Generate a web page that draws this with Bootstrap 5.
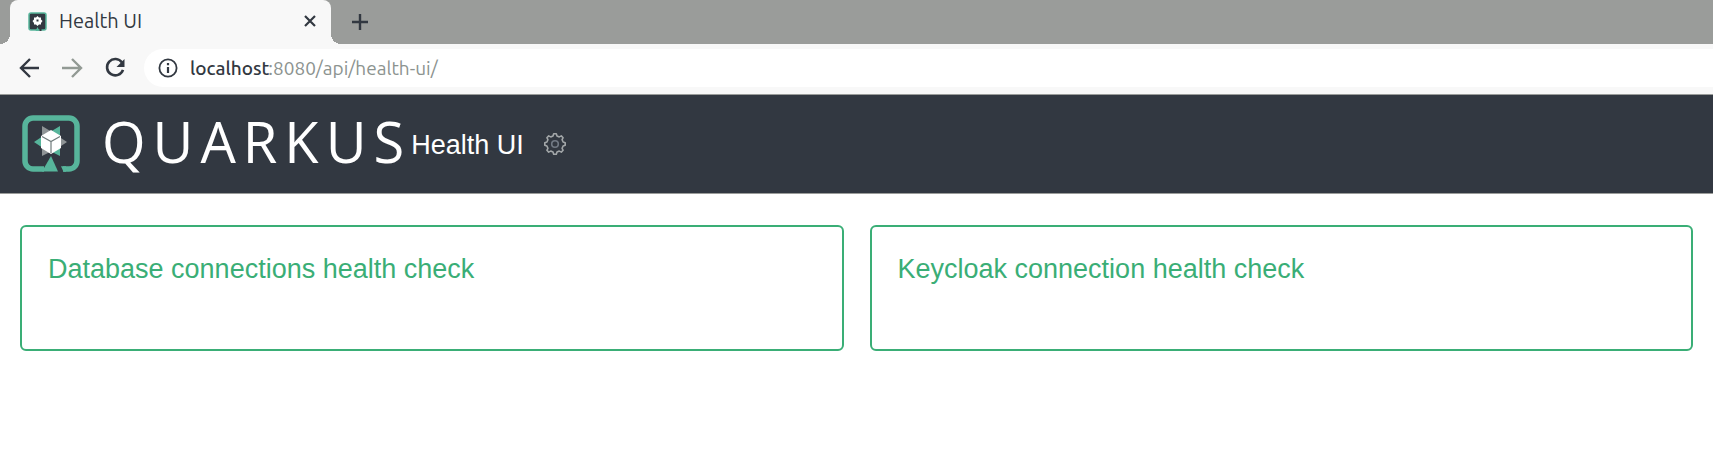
<!DOCTYPE html>
<html lang="en">
<head>
<meta charset="utf-8">
<meta name="viewport" content="width=device-width, initial-scale=1">
<title>Health UI</title>
<link href="https://cdn.jsdelivr.net/npm/bootstrap@5.3.0/dist/css/bootstrap.min.css" rel="stylesheet">
<style>
  :root { --ink: #323841; --chrome: #f8f8f8; --ok: #3aae76; }
  body { font-family: "Liberation Sans", Arial, sans-serif; background: #fff; }
  .chrome { font-family: Ubuntu, "Noto Sans", sans-serif; font-size: 19px; line-height: 24px; color: var(--ink); }
  .tab-strip { background: #9a9c9a; height: 44px; padding-left: 10px; }
  .browser-tab { position: relative; width: 321px; background: var(--chrome); border-radius: 8px 8px 0 0; padding: 0 12px 2px 18px; font-size: 20px; }
  .browser-tab::before, .browser-tab::after { content: ""; position: absolute; bottom: 0; width: 10px; height: 10px; }
  .browser-tab::before { right: 100%; background: radial-gradient(circle at 0 0, transparent 10px, var(--chrome) 10px); }
  .browser-tab::after { left: 100%; background: radial-gradient(circle at 100% 0, transparent 10px, var(--chrome) 10px); }
  .icon-btn { display: flex; border: 0; padding: 0; background: none; color: inherit; }
  .icon-muted { color: #929a94; }
  .toolbar { background: var(--chrome); border-bottom: 1px solid #9a9c9a; padding: 5px 0 7px 18px; }
  .address { height: 38px; margin-left: 18px; padding-left: 14px; background: #fff; border-radius: 19px 0 0 19px; }
  .address .input-group-text, .address .form-control { border: 0; padding: 0; background: none; font-size: inherit; line-height: inherit; color: var(--ink); }
  .address .input-group-text { font-weight: 500; }
  .address .form-control { color: #8c938f; }
  .app-bar { background: var(--ink); border-bottom: 1px solid #9a9c9a; padding: 20px 22px; }
  .wordmark { font: 400 56px/52px "Open Sans", sans-serif; letter-spacing: 7px; color: #fff; margin-left: 22px; padding-bottom: 6px; }
  .app-title { font-size: 27px; line-height: 32px; color: #fff; padding-top: 2px; }
  .settings { margin-left: 20px; color: #a3a7a9; }
  .checks { padding: 31px 20px; }
  .checks .row { --bs-gutter-x: 26px; --bs-gutter-y: 26px; }
  .check-card { border: 2px solid var(--ok); border-radius: 6px; min-height: 126px; padding: 26px; }
  .check-card .card-title { font-size: 27px; line-height: 32px; color: var(--ok); font-weight: 400; margin: 0; }
</style>
</head>
<body>
<div class="chrome">
  <div class="tab-strip d-flex">
    <div class="browser-tab d-flex align-items-center">
      <svg width="19" height="19" viewBox="0 0 19 19" aria-hidden="true">
        <rect x="1" y="1" width="17" height="17" rx="2" fill="#323841" stroke="#57b59b" stroke-width="1.500"/>
        <path d="M9.500 4l1.500 1.500h2v2l1.500 1.500-1.500 2v1.500h-2l-1.500 1.500-1.500-1.500h-2V11L4.500 9 6 7.500v-2h2z" fill="#fff"/>
        <path d="M8.500 7.500h2v2h-2z" fill="#323841"/>
        <path d="M9.500 15l2 4h-4z" fill="#57b59b"/><path d="M11.500 17h2v2h-2z" fill="#323841"/>
      </svg>
      <span class="flex-grow-1 ms-2 ps-1">Health UI</span>
      <button class="icon-btn" type="button" aria-label="Close tab">
        <svg width="18" height="18" viewBox="0 0 18 18" fill="none" stroke="currentColor" stroke-width="2.200"><path d="M4 4l10 10M14 4L4 14"/></svg>
      </button>
    </div>
    <button class="icon-btn align-items-center ms-3 ps-1" type="button" aria-label="New tab">
      <svg width="18" height="18" viewBox="0 0 18 18" fill="none" stroke="currentColor" stroke-width="2.400"><path d="M9 1v16M1 9h16"/></svg>
    </button>
  </div>
  <div class="toolbar d-flex align-items-center">
    <button class="icon-btn" type="button" aria-label="Back">
      <svg width="22" height="22" viewBox="0 0 22 22" fill="none" stroke="currentColor" stroke-width="2.400"><path d="M21 11H4M12 2l-9 9 9 9"/></svg>
    </button>
    <button class="icon-btn icon-muted ms-3 ps-1" type="button" aria-label="Forward">
      <svg width="24" height="22" viewBox="0 0 24 22" fill="none" stroke="currentColor" stroke-width="2.400"><path d="M2 11h18M12 2l9 9-9 9"/></svg>
    </button>
    <button class="icon-btn ms-3 ps-1" type="button" aria-label="Reload">
      <svg width="22" height="22" viewBox="0 0 22 22"><path d="M18 5.500A8.200 8.200 0 1 0 19 12.800" fill="none" stroke="currentColor" stroke-width="2.600"/><path d="M20.500 2v8h-8z" fill="currentColor"/></svg>
    </button>
    <div class="address input-group flex-nowrap align-items-center flex-grow-1 w-auto">
      <svg width="20" height="20" viewBox="0 0 20 20" fill="none" stroke="currentColor" aria-hidden="true"><circle cx="10" cy="10" r="8.600" stroke-width="1.800"/><path d="M10 9v6M10 5v2.200" stroke-width="2.200"/></svg>
      <label class="input-group-text ms-2 ps-1" for="url">localhost</label>
      <input class="form-control" id="url" type="text" value=":8080/api/health-ui/">
    </div>
  </div>
</div>

<header class="app-bar d-flex align-items-center">
  <svg width="58" height="58" viewBox="0 0 58 58" role="img" aria-label="Quarkus logo">
    <path d="M22 54H11a8 8 0 0 1-8-8V11a8 8 0 0 1 8-8h36a8 8 0 0 1 8 8v35a8 8 0 0 1-8 8h-6" fill="none" stroke="#57b59b" stroke-width="5.500"/>
    <path d="M29 41l7 15.500H20z" fill="#57b59b"/>
    <path d="M39 51.200h5v5.500h-2.500z" fill="#57b59b"/>
    <path d="M20 11l10 6-10 8zM45 27l-9-6v12zM20 41v-13l10 8z" fill="#8f9496"/>
    <path d="M38 11v15l-10-9zM12 27l9-6v12zM38 41v-14l-10 9z" fill="#57b59b"/>
    <path d="M29 15l10 6v12l-10 6-10-6V21z" fill="#fff"/>
    <path d="M20 21.500l9 5 9-5M29 26.500V38" fill="none" stroke="#6f7b7b" stroke-width="1.200"/>
  </svg>
  <span class="wordmark">QUARKUS</span>
  <span class="app-title">Health UI</span>
  <button class="icon-btn settings" type="button" aria-label="Settings">
    <svg width="24" height="24" viewBox="-11 -12 24 24" fill="none" stroke="currentColor" stroke-width="1.600" stroke-linejoin="round">
      <path d="M-2-8.100-1.300-10.200H1.300L2-8.100 4.300-7.100 6.300-8.100 8.100-6.300 7.100-4.300 8.100-2 10.200-1.300V1.300L8.100 2 7.100 4.300 8.100 6.300 6.300 8.100 4.300 7.100 2 8.100 1.300 10.200H-1.300L-2 8.100-4.300 7.100-6.300 8.100-8.100 6.300-7.100 4.300-8.100 2-10.200 1.300V-1.300L-8.100-2-7.100-4.300-8.100-6.300-6.300-8.100-4.300-7.100Z"/>
      <circle r="3.300" stroke="#727a85"/>
    </svg>
  </button>
</header>

<main class="checks">
  <div class="row">
    <div class="col-12 col-md-6"><div class="card check-card"><h2 class="card-title">Database connections health check</h2></div></div>
    <div class="col-12 col-md-6"><div class="card check-card"><h2 class="card-title">Keycloak connection health check</h2></div></div>
  </div>
</main>
<script src="https://cdn.jsdelivr.net/npm/bootstrap@5.3.0/dist/js/bootstrap.bundle.min.js"></script>
</body>
</html>
